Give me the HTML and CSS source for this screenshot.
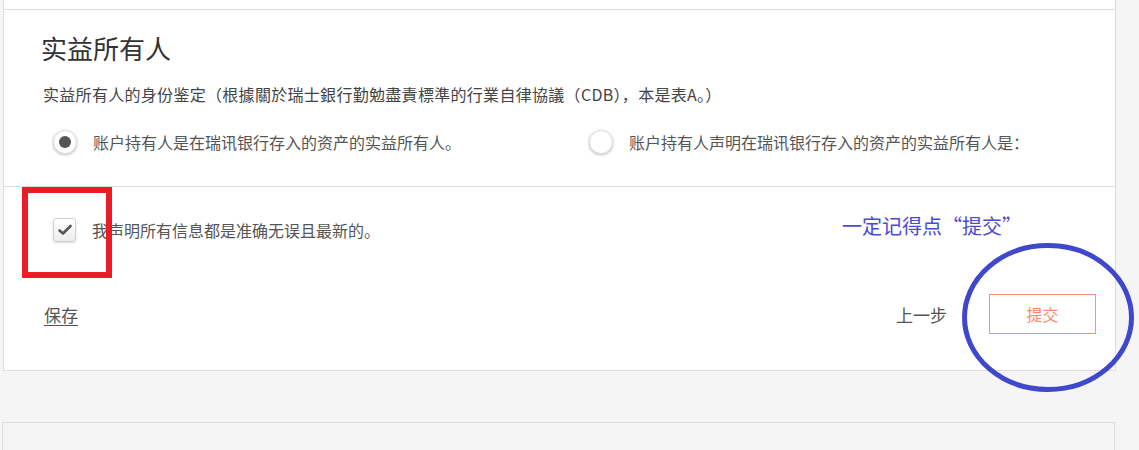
FILE: index.html
```html
<!DOCTYPE html>
<html lang="zh-CN">
<head>
    <meta charset="UTF-8">
    <meta name="viewport" content="width=device-width, initial-scale=1.0">
    <title>实益所有人</title>
    <link rel="stylesheet" href="styles.css">
</head>
<body>
    <div class="page">
        <!-- 表单卡片 -->
        <div class="card">
            <div class="section section-prev"></div>

            <div class="section section-owner">
                <h2 class="title">实益所有人</h2>
                <p class="desc">实益所有人的身份鉴定（根據關於瑞士銀行勤勉盡責標準的行業自律協議（CDB），本是表A。）</p>
                <div class="options">
                    <label class="option">
                        <span class="radio checked"></span>
                        <span>账户持有人是在瑞讯银行存入的资产的实益所有人。</span>
                    </label>
                    <label class="option">
                        <span class="radio"></span>
                        <span>账户持有人声明在瑞讯银行存入的资产的实益所有人是：</span>
                    </label>
                </div>
            </div>

            <div class="section section-confirm">
                <label class="confirm">
                    <span class="checkbox">
                        <svg width="14" height="12" viewBox="0 0 14 12"><path d="M1.5 6.5 L5 9.5 L12.5 2" fill="none" stroke="#555" stroke-width="2.6" stroke-linecap="round" stroke-linejoin="round"/></svg>
                    </span>
                    <span>我声明所有信息都是准确无误且最新的。</span>
                </label>
                <div class="actions">
                    <a class="save-link" href="#">保存</a>
                    <div class="nav">
                        <span class="prev-step">上一步</span>
                        <button class="submit-btn">提交</button>
                    </div>
                </div>
            </div>
        </div>

        <!-- 下一张卡片 -->
        <div class="card card-next"></div>

        <!-- 截图上的标注 -->
        <div class="mark-red"></div>
        <div class="mark-note">一定记得点“提交”</div>
        <svg class="mark-circle" width="180" height="156" viewBox="0 0 180 156">
            <ellipse cx="88" cy="76.5" rx="83.5" ry="72" fill="none" stroke="#3f48cc" stroke-width="5"/>
        </svg>
    </div>
</body>
</html>
```

FILE: styles.css
```css
/* 页面基础 */
body {
    margin: 0;
    background: #f5f5f5;
    font-family: "Noto Sans CJK SC", "Noto Sans", sans-serif;
    color: #555;
}

.page {
    position: relative;
    height: 450px;
    overflow: hidden;
}

.card {
    margin-left: 3px;
    width: 1111px;
    background: #fff;
    border: 1px solid #dcdcdc;
    border-top: none;
}

.section {
    padding: 0 19px 0 39px;
    border-bottom: 1px solid #dcdcdc;
}

.section:last-child {
    border-bottom: none;
}

.section-prev {
    height: 9px;
}

/* 实益所有人 */
.section-owner {
    padding-top: 25px;
    padding-bottom: 32px;
}

.title {
    margin: 0 0 0 -2px;
    font-size: 26px;
    line-height: 26px;
    font-weight: normal;
    color: #333;
}

.desc {
    margin: 25px 0 0 0;
    font-size: 16px;
    line-height: 16px;
    letter-spacing: 0.3px;
    color: #444;
}

.options {
    display: grid;
    grid-template-columns: 536px 1fr;
    margin-top: 28px;
}

.option {
    display: flex;
    align-items: center;
    gap: 16px;
    padding-left: 10px;
    font-size: 16px;
    line-height: 24px;
    color: #555;
}

.radio {
    width: 24px;
    height: 24px;
    box-sizing: border-box;
    border: 1px solid #ddd;
    border-radius: 50%;
    background: #fff;
    box-shadow: 0 1px 3px rgba(0, 0, 0, 0.25);
    display: flex;
    align-items: center;
    justify-content: center;
    flex-shrink: 0;
}

.radio.checked::after {
    content: "";
    width: 12px;
    height: 12px;
    border-radius: 50%;
    background: #555;
}

/* 声明与按钮 */
.section-confirm {
    padding-top: 31px;
    padding-bottom: 36px;
}

.confirm {
    display: flex;
    align-items: center;
    gap: 16px;
    padding-left: 10px;
    font-size: 16px;
    line-height: 24px;
    color: #555;
}

.checkbox {
    width: 23px;
    height: 24px;
    box-sizing: border-box;
    border: 1px solid #d0d0d0;
    border-radius: 3px;
    background: linear-gradient(#fff, #ececec);
    box-shadow: 0 1px 2px rgba(0, 0, 0, 0.15);
    display: flex;
    align-items: center;
    justify-content: center;
}

.actions {
    display: flex;
    justify-content: space-between;
    align-items: center;
    margin-top: 52px;
}

.save-link {
    margin-left: 1px;
    font-size: 17px;
    color: #555;
    text-decoration: underline;
    text-underline-offset: 3px;
}

.nav {
    display: flex;
    align-items: center;
    gap: 42px;
}

.prev-step {
    font-size: 17px;
    color: #555;
}

.submit-btn {
    width: 107px;
    height: 40px;
    background: #fff;
    border: 1px solid #ff9170;
    color: #ff8a66;
    font-family: inherit;
    font-size: 16px;
    cursor: pointer;
}

.card-next {
    margin-top: 51px;
    margin-left: 2px;
    height: 40px;
    background: #f5f5f5;
    border-top: 1px solid #dcdcdc;
}

/* 标注 */
.mark-red {
    position: absolute;
    left: 22px;
    top: 187px;
    width: 90px;
    height: 91px;
    box-sizing: border-box;
    border: 6px solid #ed1c24;
}

.mark-note {
    position: absolute;
    left: 842px;
    top: 215px;
    font-size: 20px;
    line-height: 22px;
    color: #4a4ad4;
}

.mark-circle {
    position: absolute;
    left: 960px;
    top: 241px;
}
```
